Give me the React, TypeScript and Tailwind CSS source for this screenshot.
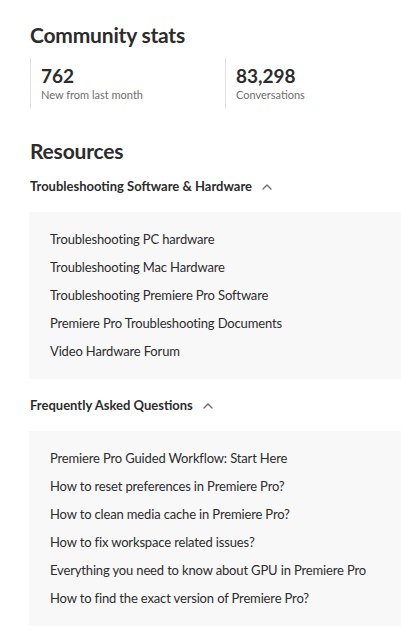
import { ChevronUp } from "lucide-react";

type Section = {
  title: string;
  links: string[];
};

const sections: Section[] = [
  {
    title: "Troubleshooting Software & Hardware",
    links: [
      "Troubleshooting PC hardware",
      "Troubleshooting Mac Hardware",
      "Troubleshooting Premiere Pro Software",
      "Premiere Pro Troubleshooting Documents",
      "Video Hardware Forum",
    ],
  },
  {
    title: "Frequently Asked Questions",
    links: [
      "Premiere Pro Guided Workflow: Start Here",
      "How to reset preferences in Premiere Pro?",
      "How to clean media cache in Premiere Pro?",
      "How to fix workspace related issues?",
      "Everything you need to know about GPU in Premiere Pro",
      "How to find the exact version of Premiere Pro?",
    ],
  },
];

const stats = [
  { value: "762", label: "New from last month" },
  { value: "83,298", label: "Conversations" },
];

const App = () => {
  return (
    <div className="w-[401px] h-[630px] overflow-hidden bg-white font-['Lato',sans-serif] text-[#2c2c2c]">
      <div className="pl-[30px] pt-[21px]">
        <h2 className="text-[21px] font-bold leading-[28px] tracking-[-0.2px]">Community stats</h2>

        <div className="flex mt-[9px]">
          {stats.map((s, i) => (
            <div
              key={s.label}
              className={`border-l border-[#e1e1e1] pl-[10px] pt-[7px] h-[50px] ${i === 0 ? "w-[195px]" : "flex-1"}`}
            >
              <div className="text-[19px] font-bold leading-[22px]">{s.value}</div>
              <div className="text-[11px] leading-[16px] text-[#6e6e6e]">{s.label}</div>
            </div>
          ))}
        </div>

        <h2 className="text-[21px] font-bold leading-[28px] tracking-[-0.2px] mt-[29px]">Resources</h2>

        {sections.map((sec, i) => (
          <div key={sec.title} className={i === 0 ? "mt-[12px]" : "mt-[17px]"}>
            <div className="flex items-center gap-[7px] h-[20px]">
              <span className="text-[13px] font-bold">{sec.title}</span>
              <ChevronUp size={16} strokeWidth={2} className="text-[#6e6e6e]" />
            </div>
            <ul className="mt-[15px] -ml-px bg-[#f8f8f8] pl-[21px] pt-[14px] pb-[13px]">
              {sec.links.map((l) => (
                <li key={l} className="h-[28px] flex items-center text-[13px] tracking-[-0.15px]">
                  {l}
                </li>
              ))}
            </ul>
          </div>
        ))}
      </div>
    </div>
  );
};

export default App;
